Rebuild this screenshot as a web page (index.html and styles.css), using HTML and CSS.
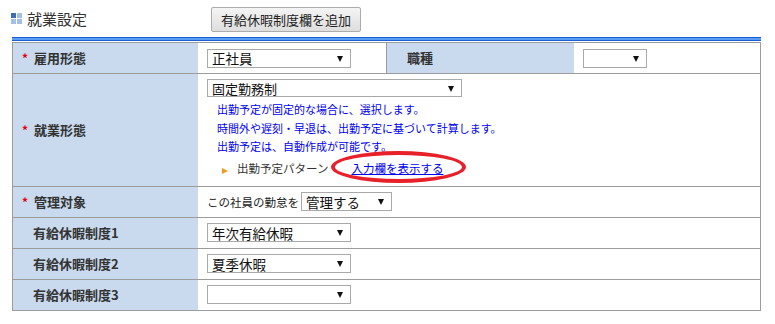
FILE: index.html
```html
<!DOCTYPE html>
<html lang="ja">
<head>
    <meta charset="UTF-8">
    <title>就業設定</title>
    <link rel="stylesheet" href="styles.css">
</head>
<body>
    <div class="page">
        <div class="head">
            <div class="title">
                <span class="title-icon"><i class="dark"></i><i></i><i></i><i></i></span>
                <h2>就業設定</h2>
            </div>
            <button class="add-btn">有給休暇制度欄を追加</button>
        </div>
        <div class="rule"></div>

        <table class="form">
            <tr>
                <th><span class="req">*</span>雇用形態</th>
                <td class="w-val"><div class="select w144">正社員</div></td>
                <th class="sep">職種</th>
                <td><div class="select w64"></div></td>
            </tr>
            <tr class="tall">
                <th><span class="req">*</span>就業形態</th>
                <td colspan="3" class="work">
                    <div class="select w255 small">固定勤務制</div>
                    <div class="note">
                        出勤予定が固定的な場合に、選択します。<br>
                        時間外や遅刻・早退は、出勤予定に基づいて計算します。<br>
                        出勤予定は、自動作成が可能です。
                    </div>
                    <div class="pattern">
                        <span class="tri"></span>出勤予定パターン<span class="link-wrap"><a href="#">入力欄を表示する</a><span class="circle"></span></span>
                    </div>
                </td>
            </tr>
            <tr>
                <th><span class="req">*</span>管理対象</th>
                <td colspan="3"><span class="inline-text">この社員の勤怠を</span><div class="select w90">管理する</div></td>
            </tr>
            <tr>
                <th>有給休暇制度1</th>
                <td colspan="3"><div class="select w144">年次有給休暇</div></td>
            </tr>
            <tr>
                <th>有給休暇制度2</th>
                <td colspan="3"><div class="select w144">夏季休暇</div></td>
            </tr>
            <tr>
                <th>有給休暇制度3</th>
                <td colspan="3"><div class="select w144"></div></td>
            </tr>
        </table>
    </div>
</body>
</html>
```

FILE: styles.css
```css
body {
    margin: 0;
    background: #fff;
    font-family: "Noto Sans CJK JP", "Liberation Sans", sans-serif;
    color: #333;
}
.page {
    width: 749px;
    padding-left: 12px;
}
.head {
    display: flex;
    align-items: center;
    height: 37px;
}
.title {
    width: 199px;
    display: flex;
    align-items: center;
}
.title-icon {
    display: grid;
    grid-template-columns: 5px 5px;
    grid-template-rows: 5px 5px;
    gap: 1px;
    margin-left: -1px;
    margin-right: 5px;
}
.title-icon i {
    background: #a5bfe0;
}
.title-icon i.dark {
    background: #3d6fb2;
}
.title h2 {
    margin: 0;
    font-size: 15px;
    font-weight: normal;
    line-height: 20px;
    color: #333;
}
.add-btn {
    width: 150px;
    height: 25px;
    padding: 0;
    margin-top: 1px;
    font-family: inherit;
    font-size: 13px;
    color: #222;
    border: 1px solid #acacac;
    border-radius: 2px;
    background: linear-gradient(#f4f4f4, #dedede);
}
.rule {
    height: 2px;
    border-top: 1px solid #1b5fd2;
    border-bottom: 1px solid #1b5fd2;
    background: #5a9cf6;
    margin-bottom: 1px;
}
.form {
    width: 749px;
    border-collapse: collapse;
    border: 1px solid #9c9c9c;
    table-layout: fixed;
}
.form tr {
    border-top: 1px solid #9c9c9c;
}
.form th, .form td {
    height: 30px;
    padding: 0 0 0 9px;
    text-align: left;
    font-size: 13px;
    line-height: 18px;
}
.form th {
    background: #c9daee;
    font-weight: bold;
    color: #333;
    padding-left: 21px;
    width: 164px;
}
.form th.sep {
    border-left: 1px solid #9c9c9c;
    padding-left: 19px;
    width: 167px;
}
.form td.w-val {
    width: 179px;
}
.req {
    display: inline-block;
    width: 12px;
    margin-left: -12px;
    color: #e60012;
    font-size: 12px;
}
.form th:not(:has(.req)) {
    padding-left: 20px;
}
.select {
    display: inline-flex;
    align-items: center;
    box-sizing: border-box;
    height: 19px;
    border: 1px solid #a9a9a9;
    background: #fff;
    font-size: 13.5px;
    line-height: 17px;
    padding: 1px 0 0 4px;
    color: #111;
    vertical-align: middle;
    position: relative;
}
.select::after {
    content: "";
    position: absolute;
    right: 7px;
    top: 6px;
    border-left: 3px solid transparent;
    border-right: 3px solid transparent;
    border-top: 6px solid #111;
}
.select.small {
    display: flex;
    height: 18px;
    font-size: 13px;
}
.w144 { width: 144px; }
.w64 { width: 64px; }
.w255 { width: 255px; }
.w90 { width: 91px; }
.inline-text {
    font-size: 11.5px;
    color: #222;
    vertical-align: middle;
    margin-right: 2px;
}
.form td.work {
    padding-top: 5px;
    padding-bottom: 9px;
    vertical-align: top;
}
.note {
    padding-left: 10px;
    margin-top: 3px;
    font-size: 11px;
    line-height: 18.5px;
    color: #0000f0;
}
.pattern {
    position: relative;
    padding-left: 15px;
    margin-top: 3px;
    font-size: 11.5px;
    line-height: 18px;
    color: #333;
}
.tri {
    display: inline-block;
    border-top: 3.5px solid transparent;
    border-bottom: 3.5px solid transparent;
    border-left: 6px solid #f39a1e;
    margin-right: 9px;
    vertical-align: -1px;
}
.link-wrap {
    position: relative;
    margin-left: 23px;
}
.link-wrap a {
    color: #0000f0;
}
.circle {
    position: absolute;
    left: -20px;
    top: -9px;
    width: 127px;
    height: 24px;
    border: 4px solid #e8202a;
    border-radius: 50%;
}
```
